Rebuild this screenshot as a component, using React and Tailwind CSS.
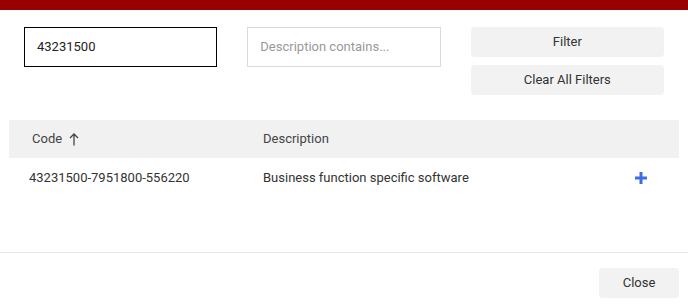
export default function App() {
  return (
    <div className="w-[688px] h-[306px] bg-white text-[13px] text-[#333] font-['Roboto',sans-serif] flex flex-col overflow-hidden">
      {/* top bar */}
      <div className="h-[10px] bg-[#990000]" />

      {/* filters */}
      <div className="grid grid-cols-3 gap-[30px] px-6 pt-[17px]">
        <div className="h-10 border border-black flex items-center px-3 text-[#222]">43231500</div>
        <div className="h-10 border border-[#d9d9d9] flex items-center px-3 text-[#999]">Description contains...</div>
        <div className="flex flex-col gap-2">
          <button className="h-[30px] bg-[#f2f2f2] rounded-sm text-[#333]">Filter</button>
          <button className="h-[30px] bg-[#f2f2f2] rounded-sm text-[#333]">Clear All Filters</button>
        </div>
      </div>

      {/* table */}
      <div className="mx-[9px] mt-[25px]">
        <div className="h-[38px] bg-[#f1f1f1] flex items-center text-[#444]">
          <div className="w-[254px] pl-[23px] flex items-center gap-[7px]">
            Code
            <svg width="10" height="13" viewBox="0 0 10 13" fill="none" stroke="#444" strokeWidth="1.3">
              <path d="M5 12.5V1M1 5l4-4 4 4" />
            </svg>
          </div>
          <div>Description</div>
        </div>
        <div className="h-10 flex items-center text-[#333]">
          <div className="w-[254px] pl-5">43231500-7951800-556220</div>
          <div className="flex-1">Business function specific software</div>
          <svg className="mr-[32px]" width="12" height="12" viewBox="0 0 12 12" fill="#3b6ee0">
            <rect x="4.5" y="0" width="3" height="12" />
            <rect x="0" y="4.5" width="12" height="3" />
          </svg>
        </div>
      </div>

      <div className="mt-[54px] border-t border-[#e6e6e6] flex justify-end pt-[15px] pr-[9px]">
        <button className="w-20 h-[30px] bg-[#f2f2f2] rounded-sm text-[#333]">Close</button>
      </div>
    </div>
  );
}
